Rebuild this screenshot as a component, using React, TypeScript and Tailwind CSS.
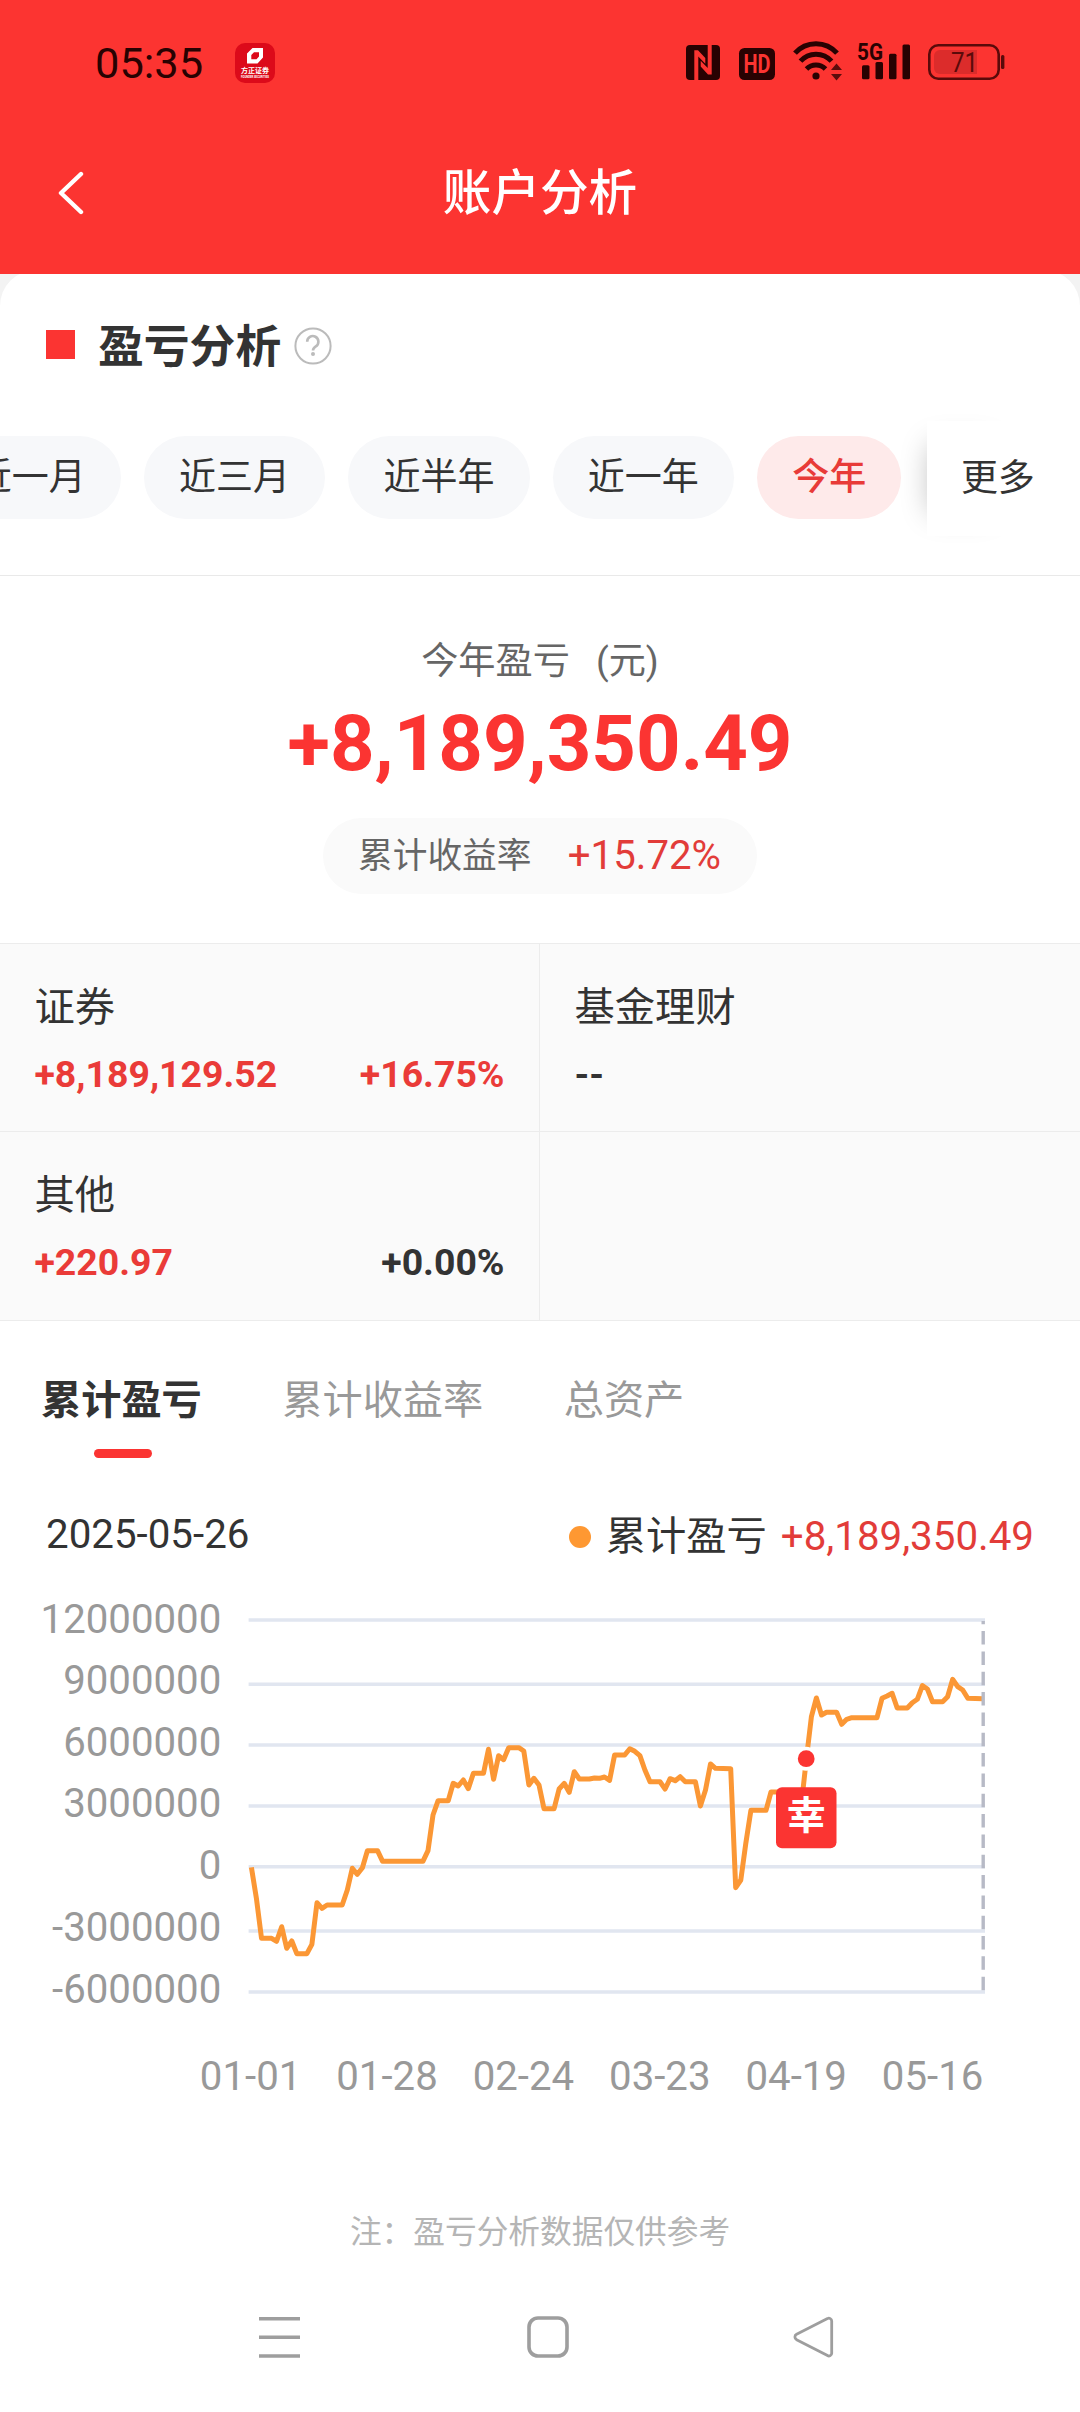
import { clsx } from "clsx"

const periods = ["近一月", "近三月", "近半年", "近一年", "今年"]

const accounts = [
  { name: "证券", amount: "+8,189,129.52", rate: "+16.75%", up: true },
  { name: "基金理财", amount: "--", rate: "", up: false },
  { name: "其他", amount: "+220.97", rate: "+0.00%", up: true },
  null,
]

const tabs = ["累计盈亏", "累计收益率", "总资产"]

const yAxis = [
  { label: "12000000", line: 30, text: 28.5 },
  { label: "9000000", line: 94.3, text: 90 },
  { label: "6000000", line: 155, text: 151.5 },
  { label: "3000000", line: 216, text: 213 },
  { label: "0", line: 276.7, text: 275 },
  { label: "-3000000", line: 341, text: 336.3 },
  { label: "-6000000", line: 402, text: 398.3 },
]

const xAxis = ["01-01", "01-28", "02-24", "03-23", "04-19", "05-16"]

// [day of year, y]
const series = [
  [0, 277.3], [1, 308.3], [2, 348.3], [4, 348.3], [5, 351.3], [6, 336.7], [7, 358.3], [8, 351],
  [9, 363.7], [11, 363.7], [12, 354.3], [13, 312.7], [14, 318.3], [15, 315], [18, 315], [19, 300],
  [20, 278.3], [21, 284.3], [22, 277.7], [23, 260.7], [25, 260.7], [26, 271.3], [34, 271.3],
  [35, 260.7], [36, 225], [37, 210.7], [39, 210.7], [40, 193.3], [41, 196], [42, 190], [43, 198.7],
  [44, 183.3], [46, 183.3], [47, 159.3], [48, 189.3], [49, 165.7], [50, 169.7], [51, 157.7],
  [53, 157.7], [54, 161], [55, 195], [56, 188.3], [57, 195], [58, 218.7], [60, 218.7], [61, 199],
  [62, 193.3], [63, 202.3], [64, 181.7], [65, 189], [67, 189], [68, 188], [69, 188.3], [70, 187],
  [71, 190.3], [72, 165], [74, 165], [75, 158.7], [76, 161.3], [77, 165.7], [78, 180], [79, 191.7],
  [81, 191.7], [82, 199], [83, 188.7], [84, 190.7], [85, 186.7], [86, 191.7], [88, 191.7], [89, 216],
  [90, 200], [91, 174], [92, 178.3], [95, 178.7], [96, 297.7], [97, 290], [98, 253.3], [99, 220.3],
  [102, 220.3], [103, 202], [108, 202], [109, 215], [110, 168.7], [111, 126.7], [112, 108],
  [113, 125], [114, 122.3], [116, 122.3], [117, 134.3], [118, 129.3], [119, 127.7], [124, 127.7],
  [125, 108.3], [126, 106], [127, 103.3], [128, 118], [130, 118], [131, 112.7], [132, 109.3],
  [133, 95.7], [134, 99], [135, 111.7], [137, 111.7], [138, 106.7], [139, 89.3], [140, 96.7],
  [141, 100], [142, 108.3], [145, 108.7],
]

const points = series.map(([d, y]) => `${(251.4 + d * 5.045).toFixed(1)},${y}`).join(" ")

function StatusBar() {
  return (
    <div className="flex h-[124px] items-center pl-[95px] pr-[75px] text-[#280202]">
      <span className="mt-[3px] w-[140px] text-[43.4px] leading-none">05:35</span>
      <svg width="40" height="40" viewBox="0 0 40 40" className="mt-[2px]">
        <rect width="40" height="40" rx="10" fill="#dc0a1a" />
        <path
          fillRule="evenodd"
          fill="#fff"
          d="M12 20.5V10.5L17.5 5H28V14.5L22.5 20.5ZM16.3 16.2H21.5L24 13.5V9.3H19L16.3 12Z"
        />
        <text x="20" y="30.3" textAnchor="middle" fontSize="7" fontWeight="700" fill="#fff">方正证券</text>
        <text x="20" y="34.8" textAnchor="middle" fontSize="3" fontWeight="700" fill="#fff" textLength="28" lengthAdjust="spacingAndGlyphs">
          FOUNDER SECURITIES
        </text>
      </svg>

      <div className="ml-auto flex items-center">
        <svg width="34" height="35" viewBox="0 0 34 35">
          <rect width="34" height="35" rx="4" fill="currentColor" />
          <path d="M8.3 35V5.2H12L19.3 13V18.8L12.3 11.5V35Z" fill="#fc3431" />
          <path d="M25.7 0V29.4H22L14.7 21.6V15.8L21.7 23.1V0Z" fill="#fc3431" />
        </svg>
        <svg width="36" height="32" viewBox="0 0 36 32" className="ml-[19px] mt-[4px] overflow-visible">
          <rect width="36" height="32" rx="5.5" fill="currentColor" />
          <text x="18" y="25" textAnchor="middle" fontSize="25" fontWeight="700" fill="#fc3431" textLength="27" lengthAdjust="spacingAndGlyphs">
            HD
          </text>
        </svg>
        <svg width="50" height="40" viewBox="0 0 50 40" className="ml-[18px] mt-[-2px]">
          <g fill="none" stroke="currentColor" strokeWidth="5">
            <path d="M2 12.2A28 28 0 0 1 44 12.2" />
            <path d="M7.5 20.2A20.6 20.6 0 0 1 38.5 20.2" />
            <path d="M13.5 28A13.3 13.3 0 0 1 32.5 28" />
          </g>
          <circle cx="23" cy="35" r="3.6" fill="currentColor" />
          <path d="M38 29H49L43.5 22.5ZM38 33H49L43.5 39.5Z" fill="#5c0d0c" />
        </svg>
        <svg width="53" height="38" viewBox="0 0 53 38" className="ml-[15px] mt-[-3px] overflow-visible">
          <text x="-1" y="18" fontSize="24.5" fontWeight="700" fill="currentColor" textLength="26" lengthAdjust="spacingAndGlyphs">
            5G
          </text>
          <g fill="currentColor">
            <rect x="4" y="23.3" width="7.5" height="14" rx="1.5" />
            <rect x="17.5" y="20" width="7.5" height="17.3" rx="1.5" />
            <rect x="31" y="11.7" width="7.5" height="25.6" rx="1.5" />
            <rect x="44.5" y="2.5" width="7.5" height="34.8" rx="1.5" />
          </g>
        </svg>
        <svg width="77" height="36" viewBox="0 0 77 36" className="ml-[17px]">
          <path d="M12 6H49V30H12a6 6 0 0 1 -6 -6V12a6 6 0 0 1 6 -6Z" fill="#dc2c2b" />
          <rect x="1.3" y="1.3" width="69.4" height="33.4" rx="9" fill="none" stroke="#5a0a0a" strokeWidth="2.6" />
          <rect x="73" y="11" width="3.4" height="14" rx="1.5" fill="#5a0a0a" />
          <text x="36.5" y="28" textAnchor="middle" fontSize="27" fill="#5a0a0a" textLength="27" lengthAdjust="spacingAndGlyphs">
            71
          </text>
        </svg>
      </div>
    </div>
  )
}

function Header() {
  return (
    <header className="relative z-10 h-[274px] bg-[#fc3431]">
      <StatusBar />
      <div className="grid h-[139px] grid-cols-[1fr_auto_1fr] items-center px-[58px]">
        <svg width="26" height="44" viewBox="0 0 26 44" className="mb-[1px]">
          <path d="M23 3L3 22L23 41" fill="none" stroke="#fff" strokeWidth="4.4" strokeLinecap="round" strokeLinejoin="round" />
        </svg>
        <h1 className="mt-[2px] text-[48.6px] font-medium leading-none text-white">账户分析</h1>
      </div>
    </header>
  )
}

function PeriodBar() {
  return (
    <div className="flex h-[115px] overflow-visible">
      <div className="ml-[-60.5px] flex shrink-0 gap-[23px] pt-[15px]">
        {periods.map((p) => (
          <button
            key={p}
            className={clsx(
              "h-[83px] shrink-0 rounded-full px-[35.2px] text-[37px] leading-none",
              p === "今年" ? "bg-[#feeaea] font-medium text-[#e83b38]" : "bg-[#f7f8fa]"
            )}
          >
            {p}
          </button>
        ))}
      </div>
      {/* clip keeps the shadow from spilling past the right edge */}
      <div className="-my-4 ml-[-14.5px] shrink-0 overflow-hidden py-4 pl-10">
        <button className="h-[115px] w-[107px] bg-white pl-[34px] text-left text-[37px] leading-none whitespace-nowrap shadow-[-20px_0_30px_-24px_rgba(0,0,0,0.28)]">
          更多
        </button>
      </div>
    </div>
  )
}

function Summary() {
  return (
    <section className="flex h-[368px] flex-col items-center border-t border-[#e9e9e9] pt-[60px]">
      <p className="flex text-[37.2px] leading-[50px] text-[#666]">
        今年盈亏<span className="ml-[26px]">(元)</span>
      </p>
      <p className="mt-[3px] text-[77.8px] font-bold leading-[110px] text-[#fb3432]">+8,189,350.49</p>
      <div className="mt-[19px] flex h-[76px] w-[434px] items-center justify-between rounded-full bg-[#fafafa] pl-[35px] pr-[36px]">
        <span className="text-[34.7px] leading-none text-[#666]">累计收益率</span>
        <span className="text-[40.2px] leading-none text-[#e23c39]">+15.72%</span>
      </div>
    </section>
  )
}

function AccountGrid() {
  return (
    <section className="grid grid-cols-2 grid-rows-[188px_189px] border-b border-[#ececec] bg-[#fafafa]">
      {accounts.map((a, i) => (
        <div
          key={i}
          className={clsx("border-t border-[#ececec] px-[34.5px] pt-[39px]", i % 2 === 0 && "border-r")}
        >
          {a && (
            <>
              <div className="text-[40.3px] leading-[50px]">{a.name}</div>
              <div className="mt-[16px] flex justify-between text-[37.4px] font-bold leading-[50px]">
                <span className={a.up ? "text-[#ea3b38]" : ""}>{a.amount}</span>
                <span className={a.rate === "+16.75%" ? "text-[#ea3b38]" : ""}>{a.rate}</span>
              </div>
            </>
          )}
        </div>
      ))}
    </section>
  )
}

function Chart() {
  return (
    <svg width="1080" height="520" viewBox="0 0 1080 520" className="mt-[31px] block">
      {yAxis.map((t) => (
        <g key={t.label}>
          <line x1="248.6" x2="985" y1={t.line} y2={t.line} stroke="#e1e6f0" strokeWidth="3.4" />
          <text x="221.3" y={t.text + 14.4} textAnchor="end" fontSize="40.2" fill="#999">
            {t.label}
          </text>
        </g>
      ))}
      {xAxis.map((t, i) => (
        <text key={t} x={250.6 + i * 136.4} y="499.8" textAnchor="middle" fontSize="40.2" fill="#999">
          {t}
        </text>
      ))}
      <polyline points={points} fill="none" stroke="#fb9735" strokeWidth="5" strokeLinejoin="round" />
      <line x1="983.2" x2="983.2" y1="400.2" y2="31" stroke="#b7bac6" strokeWidth="3.4" strokeDasharray="13.5 6.83" />
      <circle cx="806.2" cy="168.7" r="12" fill="#fff" />
      <circle cx="806.2" cy="168.7" r="8.4" fill="#fb3432" />
      <rect x="776" y="197.3" width="60.5" height="61" rx="6" fill="#fb3432" />
      <text x="806.2" y="239.2" textAnchor="middle" fontSize="39" fontWeight="700" fill="#fff">
        幸
      </text>
    </svg>
  )
}

function NavBar() {
  return (
    <nav className="mt-auto flex h-[150px] items-center justify-between pl-[259px] pr-[245px] text-[#9e9e9e]">
      <svg width="41" height="42" viewBox="0 0 41 42">
        <path d="M0 2.7H41M0 21.3H41M0 40H41" stroke="currentColor" strokeWidth="3.6" />
      </svg>
      <svg width="42" height="42" viewBox="0 0 42 42" className="ml-[2px]">
        <rect x="2" y="2" width="38" height="38" rx="9" fill="none" stroke="currentColor" strokeWidth="3.6" />
      </svg>
      <svg width="42" height="42" viewBox="0 0 42 42">
        <path
          d="M34.5 2.6L3.6 18.3a3 3 0 0 0 0 5.4L34.5 39.6a2.8 2.8 0 0 0 4.2 -2.4V5a2.8 2.8 0 0 0 -4.2 -2.4Z"
          fill="none"
          stroke="currentColor"
          strokeWidth="2.8"
        />
      </svg>
    </nav>
  )
}

export default function App() {
  return (
    <div className="flex h-[2412px] w-[1080px] flex-col overflow-hidden bg-[#f3f3f3] font-['Roboto','Noto_Sans_CJK_SC',sans-serif] text-[#333]">
      <Header />
      <main className="-mt-[4px] flex flex-1 flex-col rounded-t-[36px] bg-white">
        <div className="flex h-[151px] items-center pl-[46px]">
          <span className="mb-[2px] size-[29px] bg-[#fb3432]" />
          <h2 className="ml-[23px] mt-[4px] text-[45.8px] font-bold leading-none">盈亏分析</h2>
          <svg width="38" height="38" viewBox="0 0 38 38" className="ml-[13px]">
            <circle cx="19" cy="19" r="17.6" fill="none" stroke="#bbb" strokeWidth="2" />
            <path d="M13.2 14.8a5.6 5.6 0 1 1 8.6 4.6c-2 1.3 -2.8 2 -2.8 4.1" fill="none" stroke="#bbb" strokeWidth="2.6" />
            <circle cx="19" cy="27" r="2" fill="#bbb" />
          </svg>
        </div>
        <PeriodBar />
        <div className="h-[39px] shrink-0" />
        <Summary />
        <AccountGrid />

        <div className="flex gap-[80.5px] pl-[41px] pt-[50px] text-[40.2px] leading-[60px]">
          {tabs.map((t, i) => (
            <div key={t} className={clsx("flex flex-col items-center", i === 0 ? "font-bold" : "text-[#999]")}>
              {t}
              {i === 0 && <span className="ml-[3px] mt-[18px] h-[9px] w-[58px] rounded-full bg-[#fb3432]" />}
            </div>
          ))}
        </div>

        <div className="mt-[51px] flex h-[50px] items-center justify-between pl-[46px] pr-[46px] text-[40.3px] leading-none">
          <span className="mt-[2px]">2025-05-26</span>
          <div className="mt-[7px] flex items-center">
            <span className="size-[22px] rounded-full bg-[#fe9832]" />
            <span className="ml-[15px]">累计盈亏</span>
            <span className="ml-[14px] text-[#e23c39]">+8,189,350.49</span>
          </div>
        </div>

        <Chart />
        <p className="mt-[103px] text-center text-[31.7px] leading-[40px] text-[#b5b5b5]">注：盈亏分析数据仅供参考</p>
        <NavBar />
      </main>
    </div>
  )
}
